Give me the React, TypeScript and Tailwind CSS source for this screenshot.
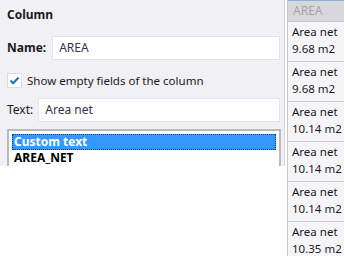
const cells = [
  ["Area net", "9.68 m2"],
  ["Area net", "9.68 m2"],
  ["Area net", "10.14 m2"],
  ["Area net", "10.14 m2"],
  ["Area net", "10.14 m2"],
  ["Area net", "10.35 m2"],
];

export default function App() {
  return (
    <div
      className="flex h-[256px] w-[345px] overflow-hidden bg-white text-[12px] text-[#1a1a1a]"
      style={{ fontFamily: '"Noto Sans", "Open Sans", sans-serif' }}
    >
      <div className="w-[287px] shrink-0">
        <div className="h-[166px] w-[285px] overflow-hidden border-r border-[#d6d6dc] bg-[#f0f0f5] pl-[7px] pr-[4px]">
          <div className="pt-[6px] font-bold leading-[18px]">Column</div>

          <div className="mt-[12px] flex items-center gap-[6px]">
            <span className="font-bold">Name:</span>
            <div className="flex h-[24px] w-[231px] items-center border border-[#e3e3e8] bg-white px-[6px] text-[#33334d]">
              AREA
            </div>
          </div>

          <div className="mt-[12px] flex items-center gap-[5px]">
            <div className="flex h-[15px] w-[15px] items-center justify-center border border-[#dcdcdc] bg-white">
              <svg width="11" height="9" viewBox="0 0 11 9">
                <path d="M1.5 4.5 L4.2 7.2 L9.5 1.5" fill="none" stroke="#1f6fb5" strokeWidth="2" />
              </svg>
            </div>
            <span className="text-[11.5px]">Show empty fields of the column</span>
          </div>

          <div className="mt-[9px] flex items-center gap-[5px]">
            <span>Text:</span>
            <div className="flex h-[24px] w-[243px] items-center border border-[#e3e3e8] bg-white px-[6px] text-[#33334d]">
              Area net
            </div>
          </div>

          <div className="mt-[7px] h-[60px] w-[274px] border-2 border-[#b9b9be] bg-white p-[3px]">
            <div className="border border-dotted border-[#0a3c78] bg-[#3399ff] px-[1px] font-bold leading-[14px] text-white">
              Custom text
            </div>
            <div className="px-[2px] font-bold leading-[15px] text-black">AREA_NET</div>
          </div>
        </div>
      </div>

      <div className="flex w-[57px] flex-col border-l border-[#c8c8c8]">
        <div className="h-[22px] border-t border-[#8fb4dc] bg-[#d8d8dc] px-[5px] leading-[20px] text-[#a4a4aa]">
          AREA
        </div>
        {cells.map((c, i) => (
          <div
            key={i}
            className="h-[40px] shrink-0 overflow-hidden whitespace-nowrap border-t border-[#c8c8c8] bg-[#f5f5f7] pl-[4px] pt-[1px] text-[11.5px] leading-[17px]"
          >
            <div>{c[0]}</div>
            <div>{c[1]}</div>
          </div>
        ))}
      </div>
    </div>
  );
}
